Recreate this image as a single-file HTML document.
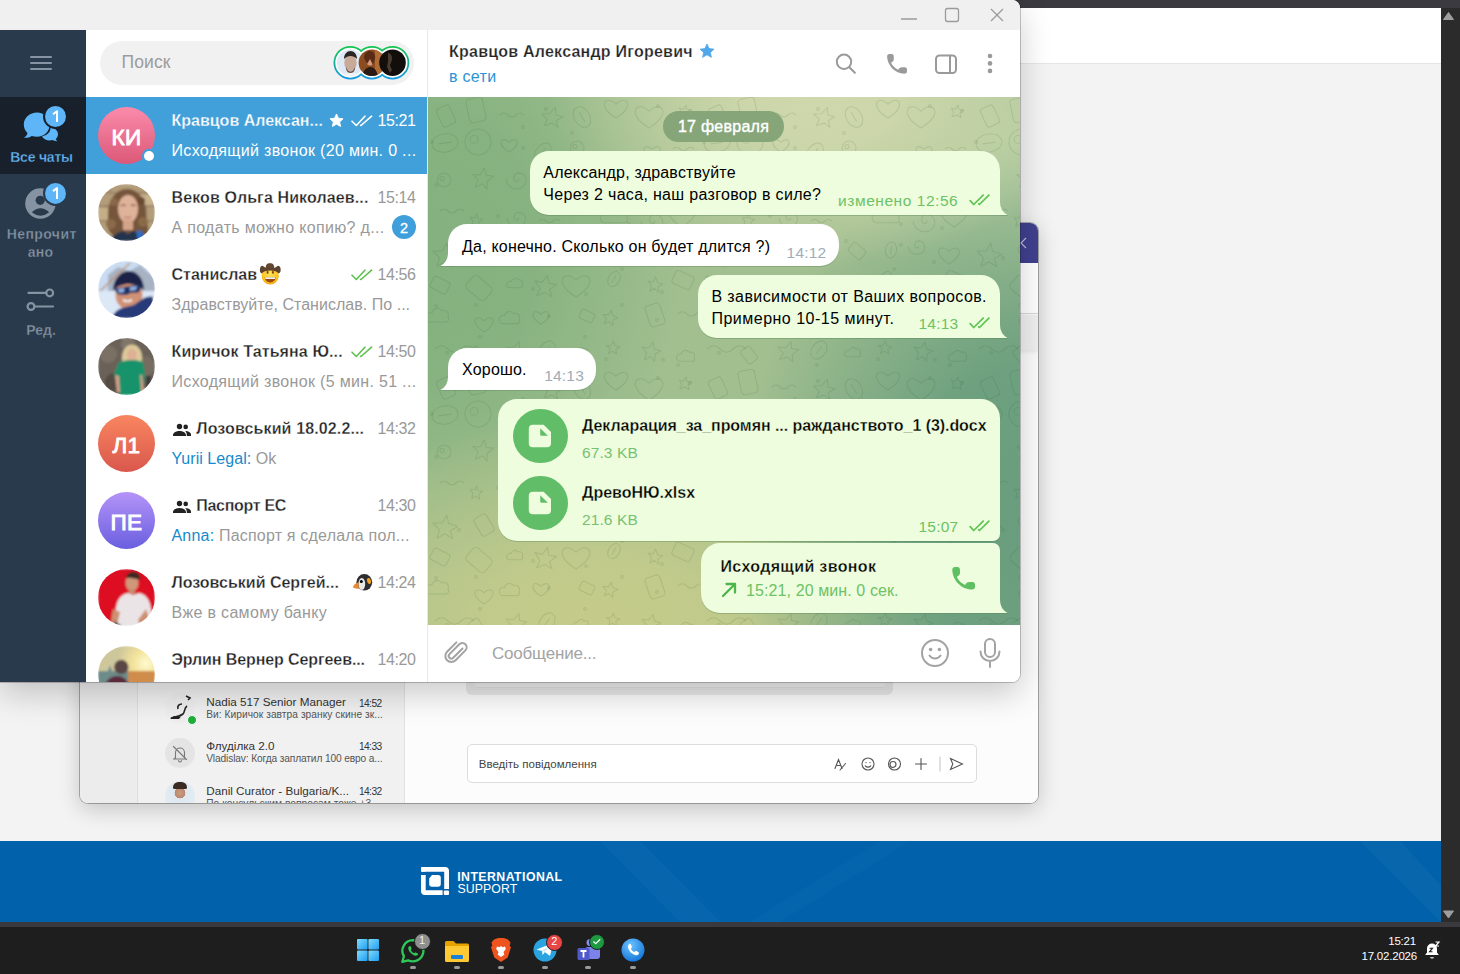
<!DOCTYPE html>
<html><head><meta charset="utf-8">
<style>
*{box-sizing:border-box;margin:0;padding:0}
html,body{width:1460px;height:974px;overflow:hidden}
body{position:relative;background:#f3f3f3;font-family:"Liberation Sans",sans-serif;color:#000}
.a{position:absolute}
.t{position:absolute;white-space:nowrap;line-height:1}
.sb{-webkit-text-stroke:0.25px currentColor}
</style></head>
<body>

<div class="a" style="left:0;top:0;width:1460px;height:8px;background:#3b3a40"></div>
<div class="a" style="left:0;top:8px;width:1441px;height:56px;background:#fff;border-bottom:1px solid #e6e6e6"></div>
<div class="a" style="left:0;top:64px;width:1441px;height:777px;background:#f3f3f3"></div>
<div class="a" style="left:0;top:841px;width:1441px;height:81px;background:#0162ab"></div>
<div class="a" style="left:1441px;top:8px;width:19px;height:914px;background:#2b2b2b"></div>
<div class="a" style="left:0;top:922px;width:1460px;height:5px;background:#3a393d"></div>
<div class="a" style="left:0;top:927px;width:1460px;height:47px;background:#1e1e1e"></div>

<svg class="a" style="left:0;top:841px" width="1441" height="81" viewBox="0 0 1441 81"><g fill="#ffffff"><path d="M600 0h40L720 81h-40z" opacity=".025"/><path d="M880 0h30L780 81h-30z" opacity=".02"/><path d="M1360 0h40L1441 45v36z" opacity=".03"/></g></svg>
<svg class="a" style="left:418px;top:864px" width="34" height="34" viewBox="418 864 34 34"><g fill="#fff"><path d="M421.5 867H445a4 4 0 0 1 4 4V889.1H444.2V871.7H421.5z"/><path d="M421 875.1H425.7V890.3H442.6V895H425a4 4 0 0 1-4-4z"/><rect x="421" y="867" width="4.7" height="4.7" rx="1"/><rect x="443.8" y="890.6" width="5.2" height="4.4" rx="1"/><path d="M432 875H438a2.8 2.8 0 0 1 2.8 2.8V884a2.8 2.8 0 0 1-2.8 2.8H432a2.8 2.8 0 0 1-2.8-2.8V878.5L432 875z"/></g></svg>
<div class="t" style="left:457.2px;top:871px;font-size:12.3px;font-weight:bold;color:#fff;letter-spacing:.45px">INTERNATIONAL</div>
<div class="t" style="left:457.4px;top:882.5px;font-size:12.3px;color:#fff;letter-spacing:.1px">SUPPORT</div>
<svg class="a" style="left:1441px;top:8px" width="19" height="914" viewBox="0 0 19 914"><path d="M2.5 11.5L7.5 4.5 12.5 11.5z" fill="#9e9e9e" stroke="#9e9e9e" stroke-width="1" stroke-linejoin="round"/><path d="M2.5 903L7.5 910 12.5 903z" fill="#9e9e9e" stroke="#9e9e9e" stroke-width="1" stroke-linejoin="round"/></svg>
<svg class="a" style="left:356px;top:938px" width="24" height="24" viewBox="0 0 24 24"><defs><linearGradient id="wg" x1="0" y1="0" x2="1" y2="1"><stop offset="0" stop-color="#7fdcff"/><stop offset="1" stop-color="#1f9df0"/></linearGradient></defs><g fill="url(#wg)"><rect x="1" y="1" width="10.6" height="10.6" rx="1"/><rect x="12.4" y="1" width="10.6" height="10.6" rx="1"/><rect x="1" y="12.4" width="10.6" height="10.6" rx="1"/><rect x="12.4" y="12.4" width="10.6" height="10.6" rx="1"/></g></svg>
<svg class="a" style="left:400px;top:938px" width="26" height="26" viewBox="0 0 26 26"><path d="M13 2.2a10.6 10.6 0 0 0-9.1 16l-1.6 5.6 5.8-1.5A10.6 10.6 0 1 0 13 2.2z" fill="none" stroke="#2fc95a" stroke-width="2.3" stroke-linejoin="round"/><path d="M9.4 8.2c.4-.4 1.1-.3 1.3.2l.9 2c.2.4 0 .8-.3 1.1l-.5.5c.7 1.5 1.8 2.6 3.3 3.3l.5-.5c.3-.3.7-.4 1.1-.3l2 .9c.5.2.6.9.2 1.3-.8.9-1.9 1.3-3 1-3.2-1-5.7-3.5-6.6-6.6-.3-1.1.1-2.2 1.1-2.9z" fill="#2fc95a"/></svg>
<div class="a" style="left:413.5px;top:932.5px;width:17px;height:17px;border-radius:50%;background:#8f8f8f;border:1.5px solid #1f1f1f"></div><div class="t" style="left:413.5px;width:17px;text-align:center;top:935px;font-size:11px;color:#eee">1</div>
<svg class="a" style="left:444px;top:939px" width="26" height="24" viewBox="0 0 26 24"><path d="M1 3.5A1.5 1.5 0 0 1 2.5 2h7l2.5 2.5h11.5A1.5 1.5 0 0 1 25 6v2H1z" fill="#e8a200"/><path d="M1 7h24v14.5a1.5 1.5 0 0 1-1.5 1.5h-21A1.5 1.5 0 0 1 1 21.5z" fill="#ffc933"/><rect x="7" y="16" width="12" height="4" rx="1" fill="#1b7fd8"/></svg>
<svg class="a" style="left:489px;top:937px" width="24" height="26" viewBox="0 0 24 26"><path d="M5 2.5l4-1.5h6l4 1.5 2.5 3-.8 3.2 1.3 1.6-3.3 10.2L12 25l-6.7-4.5L2 10.3l1.3-1.6-.8-3.2z" fill="#f0541e"/><path d="M8 9.5l2.5.7L12 9l1.5 1.2L16 9.5l.8 2.5-2.3 3 .8 2.7L12 20l-3.3-2.3.8-2.7-2.3-3z" fill="#fff"/></svg>
<svg class="a" style="left:533px;top:938px" width="24" height="24" viewBox="0 0 24 24"><circle cx="12" cy="12" r="11.5" fill="#2aa3e0"/><path d="M4.2 11.6L19.6 5.6 16.8 17.4 11.8 13.8 9.8 16.4 9.2 12.6z" fill="#fff" stroke="#fff" stroke-width=".6" stroke-linejoin="round"/><path d="M9.2 12.6L16.5 7.8 11.8 13.8z" fill="#cfe8f6"/></svg>
<div class="a" style="left:545.8px;top:933.5px;width:17px;height:17px;border-radius:50%;background:#e84646;border:1.5px solid #1f1f1f"></div><div class="t" style="left:545.8px;width:17px;text-align:center;top:936px;font-size:11px;color:#fff">2</div>
<svg class="a" style="left:576px;top:937px" width="26" height="26" viewBox="0 0 26 26"><circle cx="14" cy="5.5" r="3.5" fill="#8b8cf0"/><rect x="9" y="10" width="15" height="12" rx="3" fill="#7b83eb"/><rect x="1.5" y="11" width="12" height="12" rx="1.5" fill="#5059c9"/><path d="M4.5 14h6M7.5 14v6.5" stroke="#fff" stroke-width="1.8"/></svg>
<div class="a" style="left:589px;top:933.5px;width:16px;height:16px;border-radius:50%;background:#1d9a3f;border:1.5px solid #1f1f1f"></div><svg class="a" style="left:592px;top:937px" width="10" height="9" viewBox="0 0 10 9"><path d="M1.5 4.5l2.2 2.2 4.5-4.5" fill="none" stroke="#fff" stroke-width="1.3"/></svg>
<svg class="a" style="left:621px;top:938px" width="24" height="24" viewBox="0 0 24 24"><defs><radialGradient id="pg" cx=".4" cy=".3" r=".8"><stop offset="0" stop-color="#6fc3ff"/><stop offset="1" stop-color="#0a6fd6"/></radialGradient></defs><circle cx="12" cy="12" r="11.5" fill="url(#pg)"/><path d="M8.2 6c.6-.3 1.3-.1 1.6.5l1 2c.2.5.1 1-.3 1.4l-.7.6c.7 1.6 1.9 2.9 3.5 3.6l.6-.7c.4-.4.9-.5 1.4-.3l2 1c.6.3.8 1 .5 1.6-.7 1.2-2 1.8-3.3 1.5-3.7-.9-6.5-3.8-7.4-7.4-.3-1.3.2-2.7 1.1-3.8z" fill="#fff"/></svg>
<div class="a" style="left:409.7px;top:966px;width:6px;height:3px;border-radius:1.5px;background:#9a9a9a"></div>
<div class="a" style="left:454px;top:966px;width:6px;height:3px;border-radius:1.5px;background:#9a9a9a"></div>
<div class="a" style="left:497.7px;top:966px;width:6px;height:3px;border-radius:1.5px;background:#9a9a9a"></div>
<div class="a" style="left:542px;top:966px;width:6px;height:3px;border-radius:1.5px;background:#9a9a9a"></div>
<div class="a" style="left:585px;top:966px;width:6px;height:3px;border-radius:1.5px;background:#9a9a9a"></div>
<div class="a" style="left:629.7px;top:966px;width:6px;height:3px;border-radius:1.5px;background:#9a9a9a"></div>
<div class="t" style="left:1340px;width:76px;text-align:right;top:935.5px;font-size:11.5px;color:#fff;letter-spacing:-.2px">15:21</div>
<div class="t" style="left:1340px;width:77px;text-align:right;top:951.2px;font-size:11.5px;color:#fff;letter-spacing:-.2px">17.02.2026</div>
<svg class="a" style="left:1423px;top:941px" width="18" height="19" viewBox="0 0 18 19"><path d="M9 2.5a5 5 0 0 0-5 5v4l-1.8 2.5h13.6L14 11.5v-4a5 5 0 0 0-5-5z" fill="#fff"/><path d="M7 16.3h4a2 1.2 0 0 1-4 0z" fill="#fff"/><path d="M6.5 7.2h3l-3 3.6h3" fill="none" stroke="#1f1f1f" stroke-width="1.1"/><path d="M12.5 1h3.5l-3.5 4h3.5" fill="none" stroke="#fff" stroke-width="1.2"/></svg>
<div id="back" class="a" style="left:80px;top:223px;width:958px;height:580px;background:#fff;border-radius:8px;overflow:hidden;box-shadow:0 0 0 1px rgba(0,0,0,.28),0 6px 22px rgba(0,0,0,.2)">
<div class="a" style="left:0;top:0;width:58px;height:580px;background:#ececec;border-right:1px solid #dedede"></div>
<div class="a" style="left:58px;top:0;width:267px;height:580px;background:#f1f1f1;border-right:1px solid #e2e2e2"></div>
<div class="a" style="left:325px;top:0;width:633px;height:580px;background:#fcfcfc"></div>
<div class="a" style="left:900px;top:0;width:58px;height:40px;background:#40408f"></div>
<div class="a" style="left:900px;top:40px;width:58px;height:51px;background:#fff;border-bottom:1px solid #d8d8d8"></div>
<div class="a" style="left:900px;top:92px;width:58px;height:35px;background:#f0f0f0;box-shadow:0 2px 4px rgba(0,0,0,.08)"></div>
<svg class="a" style="left:936px;top:14px" width="12" height="12" viewBox="0 0 12 12"><path d="M10 1L5 6l5 5" fill="none" stroke="#b8b8e0" stroke-width="1.2"/></svg>
<div class="a" style="left:386px;top:440px;width:427px;height:32px;border-radius:0 0 6px 6px;background:#e9e9e9"></div>
<div class="a" style="left:395px;top:440px;width:410px;height:25px;background:#efefef;border-bottom:1px solid #e0e0e0;border-radius:0 0 3px 3px"></div>
<div class="a" style="left:386.8px;top:521.4px;width:510px;height:39px;border-radius:5px;background:#fff;border:1px solid #dcdcdc"></div>
<div class="t" style="left:398.8px;top:535.5px;font-size:11.5px;color:#444">Введіть повідомлення</div>
<svg class="a" style="left:750px;top:530px" width="140" height="22" viewBox="750 530 140 22"><g fill="none" stroke="#555" stroke-width="1.1" stroke-linecap="round"><circle cx="788" cy="541" r="6"/><path d="M785.3 542.8c.7.9 1.6 1.3 2.7 1.3s2-.4 2.7-1.3"/><circle cx="814.5" cy="541" r="6"/><path d="M813 544.5a3 3 0 1 1 3 -3c0 1.5-1 2.5-3 3z"/><path d="M841 535.5v11M835.5 541h11"/><path d="M860 534v14" stroke="#c8c8c8"/><path d="M870.5 535.5l12 5.5-12 5.5 2.3-5.5z"/><path d="M755 545.5l3.5-9 3.5 9M756.3 542.5h4.4M760 547l5.5-6.5"/></g><circle cx="786" cy="539.6" r=".7" fill="#555"/><circle cx="790" cy="539.6" r=".7" fill="#555"/></svg>
<div class="a" style="left:85.4px;top:470.4px;width:30px;height:30px;border-radius:50%;background:#eeeeee"></div><svg class="a" style="left:85.4px;top:470.4px" width="30" height="30" viewBox="0 0 30 30"><g fill="none" stroke="#222" stroke-width="1.6"><path d="M6 25c3-1 8-1 12-4 2-2 1-6 4-8M17 11c-3 0-5 2-4 5"/><path d="M21 3l4 2-2 2"/></g><path d="M5 26l4-3 6 1 3-3-4 5z" fill="#222"/></svg><div class="a" style="left:107px;top:492px;width:10px;height:10px;border-radius:50%;background:#1fae3b;border:1px solid #fff"></div><div class="t" style="left:126.2px;top:473.4px;font-size:11.7px;color:#333">Nadia 517 Senior Manager</div><div class="t" style="left:278.9px;top:475.5px;font-size:10.2px;color:#333;letter-spacing:-.55px">14:52</div><div class="t" style="left:126.2px;top:487.4px;font-size:10.2px;color:#555;letter-spacing:0.05px">Ви: Киричок завтра зранку скине зк...</div>
<div class="a" style="left:85.4px;top:515.2px;width:30px;height:30px;border-radius:50%;background:#e4e4e4"></div><svg class="a" style="left:85.4px;top:515.2px" width="30" height="30" viewBox="0 0 30 30"><g fill="none" stroke="#777" stroke-width="1.1" stroke-linecap="round"><path d="M10.5 19.5v-5a4.5 4.5 0 0 1 9 0v5l1.5 1.5H9z M13.5 22.5a1.5 1.5 0 0 0 3 0M8.5 8.5l13 13"/></g></svg><div class="t" style="left:126.2px;top:517.0px;font-size:11.7px;color:#333">Флудiлка 2.0</div><div class="t" style="left:278.9px;top:519.1px;font-size:10.2px;color:#333;letter-spacing:-.55px">14:33</div><div class="t" style="left:126.2px;top:531.0px;font-size:10.2px;color:#555;letter-spacing:-0.13px">Vladislav: Когда заплатил 100 евро а...</div>
<div class="a" style="left:85.4px;top:558px;width:30px;height:30px;border-radius:50%;background:radial-gradient(circle at 50% 40%,#c99a80 0,#b98a70 22%,#dfe8f0 24%,#e6eef5 100%)"></div><div class="a" style="left:93px;top:559px;width:14px;height:7px;border-radius:7px 7px 2px 2px;background:#3a2a22"></div><div class="t" style="left:126.2px;top:562.1px;font-size:11.7px;color:#333">Danil Curator - Bulgaria/K...</div><div class="t" style="left:278.9px;top:564.2px;font-size:10.2px;color:#333;letter-spacing:-.55px">14:32</div><div class="t" style="left:126.2px;top:576.1px;font-size:10.2px;color:#555;letter-spacing:0.05px">По консульским вопросам тоже +3...</div>
</div>
<div id="tg" class="a" style="left:0;top:0;width:1020px;height:682px;background:#fff;border-radius:0 8px 8px 0;overflow:hidden;box-shadow:0 0 0 1px rgba(0,0,0,.22),0 12px 32px rgba(0,0,0,.2)">
  <div class="a" style="left:0;top:0;width:1020px;height:30px;background:#f0f0f0"></div>
  <div class="a" style="left:0;top:30px;width:86px;height:652px;background:#293a4c"></div>
  <div class="a" style="left:0;top:97px;width:86px;height:77px;background:#17202b"></div>

  <svg class="a" style="left:0;top:0" width="86" height="682" viewBox="0 0 86 682">
    <g fill="#8593a3">
      <rect x="30" y="56" width="22" height="2" rx="1"/>
      <rect x="30" y="62" width="22" height="2" rx="1"/>
      <rect x="30" y="68" width="22" height="2" rx="1"/>
    </g>
    <g fill="#5eb5f7">
      <path d="M37 112.6c-7.2 0-13.2 5.2-13.2 12 0 3.3 1.4 6.3 3.7 8.4-.4 2-1.7 3.6-3.5 4.8 2.9.3 5.7-.4 7.8-1.8 1.6.5 3.3.8 5.2.8 7.2 0 12.6-5.2 12.6-12s-5.4-12.2-12.6-12.2z"/>
      <path d="M50.5 127.5c4.5.3 7.5 3.3 7.5 6.8 0 1.8-.8 3.5-2.2 4.7.2 1 .9 1.6 1.6 2.2-2 .1-3.6-.4-4.8-1.2-1 .3-2 .4-3 .4-3.5 0-6.5-1.6-7.6-4.2 5.3-.6 8.8-4.6 8.5-8.7z"/>
      <circle cx="55.5" cy="116.5" r="12.5" fill="#17202b"/>
      <circle cx="55.5" cy="116.5" r="10.5"/>
    </g>
    <g>
      <circle cx="40.4" cy="203.5" r="15.2" fill="#8593a3"/>
      <circle cx="40.2" cy="200.3" r="4.6" fill="#293a4c"/>
      <path d="M31.8 212.3Q40.5 204.2 49.2 212.3Q40.5 219.4 31.8 212.3Z" fill="#293a4c"/>
      <circle cx="55.5" cy="193.4" r="12.5" fill="#293a4c"/>
      <circle cx="55.5" cy="193.4" r="10.5" fill="#5eb5f7"/>
    </g>
    <g stroke="#8593a3" stroke-width="2.2" fill="none" stroke-linecap="round">
      <line x1="28.5" y1="292.9" x2="46" y2="292.9"/>
      <circle cx="49.7" cy="292.9" r="3.4"/>
      <line x1="34.5" y1="306.5" x2="53" y2="306.5"/>
      <circle cx="31" cy="306.5" r="3.4"/>
    </g>
  </svg>

<svg class="a" style="left:0;top:0" width="86" height="220" viewBox="0 0 86 220"><g stroke="#fff" stroke-width="2" fill="none" stroke-linejoin="round"><path d="M53 114.2L57 111.2V122.1"/><path d="M53 191.1L57 188.1V199"/></g></svg>
<div class="t" style="top:150.05px;font-size:14px;color:#64b5f6;font-weight:bold;-webkit-text-stroke:0.3px #17202b;letter-spacing:-0.2px;left:-158.50px;width:400px;text-align:center;">Все чаты</div>
<div class="t" style="top:226.95px;font-size:14px;color:#8593a3;font-weight:bold;-webkit-text-stroke:0.3px #293a4c;letter-spacing:0.4px;left:-158.30px;width:400px;text-align:center;">Непрочит</div>
<div class="t" style="top:245.45px;font-size:14px;color:#8593a3;font-weight:bold;-webkit-text-stroke:0.3px #293a4c;letter-spacing:0.2px;left:-159.50px;width:400px;text-align:center;">ано</div>
<div class="t" style="top:322.95px;font-size:14px;color:#8593a3;font-weight:bold;-webkit-text-stroke:0.3px #293a4c;left:-159.00px;width:400px;text-align:center;">Ред.</div>
  <div class="a" style="left:86px;top:30px;width:342px;height:652px;background:#fff"></div>
  <div class="a" style="left:86px;top:97px;width:342px;height:77px;background:#419fd9"></div>
  <div class="a" style="left:427px;top:30px;width:1px;height:652px;background:#e8e8e8"></div>

<div class="a" style="left:86px;top:30px;width:342px;height:652px;overflow:hidden">
</div>
<div class="a" style="left:98px;top:107px;width:57px;height:57px;border-radius:50%;background:linear-gradient(#fb8bab,#dc5878)"></div><div class="t" style="left:98px;width:57px;text-align:center;top:126.88px;font-size:22.5px;color:#fff;-webkit-text-stroke:0.9px #fff;letter-spacing:0.3px">КИ</div>
<div class="a" style="left:143.6px;top:150.6px;width:10.8px;height:10.8px;border-radius:50%;background:#fff;box-shadow:0 0 0 2.2px #419fd9"></div>
<div class="a" style="left:98px;top:415px;width:57px;height:57px;border-radius:50%;background:linear-gradient(#f98660,#d9574c)"></div><div class="t" style="left:98px;width:57px;text-align:center;top:434.88px;font-size:22.5px;color:#fff;-webkit-text-stroke:0.9px #fff;letter-spacing:0.3px">Л1</div>
<div class="a" style="left:98px;top:492px;width:57px;height:57px;border-radius:50%;background:linear-gradient(#b493f8,#6a5fdf)"></div><div class="t" style="left:98px;width:57px;text-align:center;top:511.88px;font-size:22.5px;color:#fff;-webkit-text-stroke:0.9px #fff;letter-spacing:0.3px">ПЕ</div>
<svg class="a" style="left:98px;top:184px" width="57" height="57" viewBox="0 0 57 57"><defs><clipPath id="c98_184"><circle cx="28.5" cy="28.5" r="28.5"/></clipPath><filter id="bc98_184" x="-10%" y="-10%" width="120%" height="120%"><feGaussianBlur stdDeviation="0.9"/></filter></defs><g clip-path="url(#c98_184)"><g filter="url(#bc98_184)"><rect width="57" height="57" fill="#b39c7a"/><path d="M0 9h57M0 22h57M0 37h57M12 0v9M40 9v13M8 22v15M48 22v15" stroke="#8c7658" stroke-width="1.4" opacity=".7"/><rect x="42" y="11" width="15" height="10" fill="#c9b48e"/><rect x="0" y="24" width="12" height="12" fill="#c4ae88"/><path d="M10 30c0-14 8-25 19-25s19 10 19 24c0 8 3 13 2 20l-6 4H16l-5-6c-2-5-1-10-1-17z" fill="#75553a"/><circle cx="13" cy="40" r="5" fill="#8a6a48"/><circle cx="45" cy="38" r="5" fill="#8a6a48"/><circle cx="16" cy="18" r="4" fill="#8a6848"/><circle cx="43" cy="17" r="4" fill="#6a4c32"/><ellipse cx="30" cy="25" rx="10" ry="14" fill="#dfb29a"/><rect x="25" y="36" width="10" height="10" fill="#d4a48a"/><path d="M22.5 21.5c2-.8 4-.8 5.5 0M32.5 21.5c2-.8 4-.8 5.5 0" stroke="#8a5a48" stroke-width="1"/><path d="M26.5 33c2 .8 4.5 .8 6.5 0" stroke="#b06a60" stroke-width="1.2"/><path d="M12 57c3-6 8-9 13-10l5 3 5-3c5 1 10 4 12 10z" fill="#22344e"/><path d="M38 48l5-2 6 11h-9z" fill="#2f6cc0"/></g></g></svg>
<svg class="a" style="left:98px;top:261px" width="57" height="57" viewBox="0 0 57 57"><defs><clipPath id="c98_261"><circle cx="28.5" cy="28.5" r="28.5"/></clipPath><filter id="bc98_261" x="-10%" y="-10%" width="120%" height="120%"><feGaussianBlur stdDeviation="0.9"/></filter></defs><g clip-path="url(#c98_261)"><g filter="url(#bc98_261)"><rect width="57" height="57" fill="#c9dcf2"/><path d="M10 14l10-8 12 4 10-6 15 14v20H10z" fill="#9fa8b6" opacity=".8"/><rect x="0" y="30" width="57" height="27" fill="#dce8f6"/><path d="M2 30L32 2" stroke="#c08a60" stroke-width="1.2"/><ellipse cx="31" cy="34" rx="13.5" ry="15" fill="#d09276"/><path d="M15 30c0-11 7-20 16-20s15 9 15 19c-4-4-9-6-15-6s-12 2-16 7z" fill="#1b2246"/><path d="M17 27.5l25-4 1.5 3-3 5-8 .5-4 2-8-.5-3-3z" fill="#223066"/><path d="M20 28l6-1 0 4-5 1zM32 26l7-1-1 4-6 1z" fill="#8fb0e0"/><path d="M25 39c3 1.5 6 1.5 9 0" stroke="#fff" stroke-width="1.5"/><path d="M14 57c2-7 8-10 14-11l8-2c6-4 12-10 19-8l2 21z" fill="#283a78"/></g></g></svg>
<svg class="a" style="left:98px;top:338px" width="57" height="57" viewBox="0 0 57 57"><defs><clipPath id="c98_338"><circle cx="28.5" cy="28.5" r="28.5"/></clipPath><filter id="bc98_338" x="-10%" y="-10%" width="120%" height="120%"><feGaussianBlur stdDeviation="0.9"/></filter></defs><g clip-path="url(#c98_338)"><g filter="url(#bc98_338)"><rect width="57" height="57" fill="#6a6258"/><circle cx="10" cy="16" r="9" fill="#7a7064"/><circle cx="47" cy="28" r="10" fill="#766c60"/><circle cx="16" cy="44" r="9" fill="#544c44"/><circle cx="30" cy="6" r="7" fill="#80766a"/><path d="M25 26c-2-6-1-13 3-17 3-3 9-3 12 0 4 4 5 11 3 17l-3 2h-12z" fill="#dcc99a"/><ellipse cx="34" cy="17" rx="4.8" ry="6.5" fill="#deb094"/><path d="M16 36l5-12 9-2h8l7 2 2 12-3 21H22z" fill="#15936a"/><path d="M17 37l2 17h3l-1-16zM44 37l2 16h-3l-1-16z" fill="#d4a088"/><rect x="48" y="38" width="5" height="13" fill="#3a3a3c"/></g></g></svg>
<svg class="a" style="left:98px;top:569px" width="57" height="57" viewBox="0 0 57 57"><defs><clipPath id="c98_569"><circle cx="28.5" cy="28.5" r="28.5"/></clipPath><filter id="bc98_569" x="-10%" y="-10%" width="120%" height="120%"><feGaussianBlur stdDeviation="0.9"/></filter></defs><g clip-path="url(#c98_569)"><g filter="url(#bc98_569)"><rect width="57" height="57" fill="#dd0a20"/><path d="M0 0h57v57H0z" fill="url(#rg6)" opacity=".0"/><ellipse cx="34" cy="14" rx="6.5" ry="8.5" fill="#d0977a"/><path d="M28 9c1-5 5-7 9-6s6 4 5 8l-3-1-6-1z" fill="#3b2a22"/><rect x="31" y="20" width="6" height="5" fill="#c88a6c"/><path d="M14 57l4-18c1-9 6-14 12-15l5 2 6-2c6 1 11 6 12 16l1 17z" fill="#ebe4e6"/><path d="M15 40l-2 12 6 4 3-13zM48 40l4 12-10 5-2-6z" fill="#cc9072"/><path d="M16 52l8 5h18l6-4v4H16z" fill="#2a2a2e"/></g></g></svg>
<svg class="a" style="left:98px;top:646px" width="57" height="36" viewBox="0 0 57 36"><defs><clipPath id="c98_646"><circle cx="28.5" cy="28.5" r="28.5"/></clipPath><filter id="bc98_646" x="-10%" y="-10%" width="120%" height="120%"><feGaussianBlur stdDeviation="0.9"/></filter></defs><g clip-path="url(#c98_646)"><g filter="url(#bc98_646)"><defs><radialGradient id="sun7" cx=".84" cy=".3" r=".5"><stop offset="0" stop-color="#fffbd2"/><stop offset=".45" stop-color="#f3e39a"/><stop offset="1" stop-color="#cfc79c"/></radialGradient></defs><rect width="57" height="57" fill="url(#sun7)"/><path d="M0 25h10l2-6 2 6h4l3-4 3 4h33v32H0z" fill="#6d8b88"/><path d="M30 25h27v32H30z" fill="#cf8c4c"/><circle cx="23.3" cy="21" r="7.2" fill="#5a4644"/><path d="M7 40c1-6 6-10 12-10s10 3 12 10z" fill="#5c2a3e"/></g></g></svg>
<svg class="a" style="left:173px;top:421.5px" width="18" height="14" viewBox="0 0 18 14"><path d="M6.5 7.2a2.7 2.7 0 1 0 0-5.4 2.7 2.7 0 0 0 0 5.4zm6.2 0a2.3 2.3 0 1 0 0-4.6 2.3 2.3 0 0 0 0 4.6zM0 13.2c0-2.6 3.2-4.2 6.5-4.2s6.5 1.6 6.5 4.2V14H0zm12.2-4.1c2.7.1 5.8 1.3 5.8 3.6V14h-4.2v-.9c0-1.6-.6-3-1.6-4z" fill="#222"/></svg>
<svg class="a" style="left:173px;top:498.5px" width="18" height="14" viewBox="0 0 18 14"><path d="M6.5 7.2a2.7 2.7 0 1 0 0-5.4 2.7 2.7 0 0 0 0 5.4zm6.2 0a2.3 2.3 0 1 0 0-4.6 2.3 2.3 0 0 0 0 4.6zM0 13.2c0-2.6 3.2-4.2 6.5-4.2s6.5 1.6 6.5 4.2V14H0zm12.2-4.1c2.7.1 5.8 1.3 5.8 3.6V14h-4.2v-.9c0-1.6-.6-3-1.6-4z" fill="#222"/></svg>
<svg class="a" style="left:250px;top:258px" width="40" height="30" viewBox="250 258 40 30"><defs><radialGradient id="cbf" cx=".5" cy=".35" r=".7"><stop offset="0" stop-color="#ffe45a"/><stop offset=".7" stop-color="#fbc21f"/><stop offset="1" stop-color="#f29a12"/></radialGradient></defs><circle cx="270.2" cy="276" r="8.6" fill="url(#cbf)"/><ellipse cx="267.6" cy="272.3" rx="0.95" ry="1.7" fill="#8a4a0c"/><ellipse cx="272.9" cy="272.3" rx="0.95" ry="1.7" fill="#8a4a0c"/><path d="M264.6 277.2H275.8C275.5 280.6 273.2 282.4 270.2 282.4S264.9 280.6 264.6 277.2Z" fill="#9a4a0a"/><path d="M264.9 277.3H275.5C275.4 278.2 275.2 278.7 275 279H265.4C265.2 278.7 265 278.2 264.9 277.3Z" fill="#eef2f6"/><path d="M265.6 269.2C265.4 264.4 267.6 263 270 263.3C272.4 263 274.6 264.4 274.4 269.2Z" fill="#654630"/><path d="M260.2 267.8C260.8 265.6 262.6 265.2 263.6 266.6C265.6 268.3 267.6 268.8 270.2 268.8C272.8 268.8 274.8 268.3 276.8 266.6C277.8 265.2 279.6 265.6 280.4 267.8C281.2 270.4 280.4 273 278.6 273.4C277.2 271.6 274.4 270.4 270.2 270.4C266 270.4 263.2 271.6 261.8 273.4C260 273 259.4 270.4 260.2 267.8Z" fill="#5e4230"/></svg>
<svg class="a" style="left:345px;top:568px" width="35" height="30" viewBox="345 568 35 30"><ellipse cx="364.3" cy="582.3" rx="7.9" ry="8.3" fill="#2e2e30"/><ellipse cx="361.8" cy="584" rx="3.4" ry="6" fill="#e8e8e8"/><circle cx="361.3" cy="581.6" r="1.5" fill="#000"/><ellipse cx="369" cy="581" rx="1.9" ry="3" fill="#f5a21c" transform="rotate(-15 369 581)"/><path d="M352.9 587.5C353.6 584.8 356 582.8 358.4 582.6L358.9 588.4C357 588.9 354.6 588.6 352.9 587.5Z" fill="#e58a2e"/></svg>
<div class="t" style="top:113.16px;font-size:16px;color:#fff;font-weight:bold;-webkit-text-stroke:0.3px #419fd9;left:171.50px;">Кравцов Алексан...</div><div class="t" style="top:113.16px;font-size:16px;color:#fff;letter-spacing:-0.4px;left:15.50px;width:400px;text-align:right;">15:21</div><div class="t" style="top:142.96px;font-size:16px;color:#fff;letter-spacing:0.32px;left:171.50px;">Исходящий звонок (20 мин. 0 ...</div>
<svg class="a" style="left:329px;top:112.5px" width="15" height="15" viewBox="0 0 24 24"><path d="M12 1.5l3.1 6.9 7.4.8-5.5 5 1.6 7.3L12 17.8l-6.6 3.7L7 14.2l-5.5-5 7.4-.8z" fill="#fff" stroke="#fff" stroke-width="1.5" stroke-linejoin="round"/></svg>
<svg class="a" style="left:350.5px;top:114.5px" width="22" height="12" viewBox="0 0 22 12"><path d="M1 6.2l4.3 4.3 8.6-9.3M9.6 10.3l.4.2 10.6-9.3" fill="none" stroke="#fff" stroke-width="1.6" stroke-linecap="round" stroke-linejoin="round"/></svg>
<div class="t" style="top:190.16px;font-size:16px;color:#222;font-weight:bold;-webkit-text-stroke:0.3px #fff;letter-spacing:0.12px;left:171.50px;">Веков Ольга Николаев...</div><div class="t" style="top:190.16px;font-size:16px;color:#999;letter-spacing:-0.4px;left:15.50px;width:400px;text-align:right;">15:14</div><div class="t" style="top:219.96px;font-size:16px;color:#999;letter-spacing:0.32px;left:171.50px;">А подать можно копию? д...</div>
<div class="a" style="left:392px;top:215px;width:24px;height:24px;border-radius:12px;background:#3f9fdb"></div>
<div class="t" style="top:221.03px;font-size:14.5px;color:#fff;left:204.00px;width:400px;text-align:center;-webkit-text-stroke:0.3px #fff;">2</div>
<div class="t" style="top:267.16px;font-size:16px;color:#222;font-weight:bold;-webkit-text-stroke:0.3px #fff;left:171.50px;">Станислав</div><div class="t" style="top:267.16px;font-size:16px;color:#999;letter-spacing:-0.4px;left:15.50px;width:400px;text-align:right;">14:56</div><div class="t" style="top:296.96px;font-size:16px;color:#999;letter-spacing:0.03px;left:171.50px;">Здравствуйте, Станислав. По ...</div>
<svg class="a" style="left:350.5px;top:268.5px" width="22" height="12" viewBox="0 0 22 12"><path d="M1 6.2l4.3 4.3 8.6-9.3M9.6 10.3l.4.2 10.6-9.3" fill="none" stroke="#5fc04f" stroke-width="1.6" stroke-linecap="round" stroke-linejoin="round"/></svg>
<div class="t" style="top:344.16px;font-size:16px;color:#222;font-weight:bold;-webkit-text-stroke:0.3px #fff;letter-spacing:0.12px;left:171.50px;">Киричок Татьяна Ю...</div><div class="t" style="top:344.16px;font-size:16px;color:#999;letter-spacing:-0.4px;left:15.50px;width:400px;text-align:right;">14:50</div><div class="t" style="top:373.96px;font-size:16px;color:#999;letter-spacing:0.32px;left:171.50px;">Исходящий звонок (5 мин. 51 ...</div>
<svg class="a" style="left:350.5px;top:345.5px" width="22" height="12" viewBox="0 0 22 12"><path d="M1 6.2l4.3 4.3 8.6-9.3M9.6 10.3l.4.2 10.6-9.3" fill="none" stroke="#5fc04f" stroke-width="1.6" stroke-linecap="round" stroke-linejoin="round"/></svg>
<div class="t" style="top:421.16px;font-size:16px;color:#222;font-weight:bold;-webkit-text-stroke:0.3px #fff;letter-spacing:0.13px;left:196.30px;">Лозовський 18.02.2...</div><div class="t" style="top:421.16px;font-size:16px;color:#999;letter-spacing:-0.4px;left:15.50px;width:400px;text-align:right;">14:32</div>
<div class="t" style="top:450.96px;font-size:16px;color:#999;letter-spacing:0.05px;left:171.50px;"><span style="color:#168acd">Yurii Legal:</span> Ok</div>
<div class="t" style="top:498.16px;font-size:16px;color:#222;font-weight:bold;-webkit-text-stroke:0.3px #fff;letter-spacing:-0.3px;left:196.30px;">Паспорт ЕС</div><div class="t" style="top:498.16px;font-size:16px;color:#999;letter-spacing:-0.4px;left:15.50px;width:400px;text-align:right;">14:30</div>
<div class="t" style="top:527.96px;font-size:16px;color:#999;letter-spacing:0.2px;left:171.50px;"><span style="color:#168acd">Anna:</span> Паспорт я сделала пол...</div>
<div class="t" style="top:575.16px;font-size:16px;color:#222;font-weight:bold;-webkit-text-stroke:0.3px #fff;left:171.50px;">Лозовський Сергей...</div><div class="t" style="top:575.16px;font-size:16px;color:#999;letter-spacing:-0.4px;left:15.50px;width:400px;text-align:right;">14:24</div><div class="t" style="top:604.96px;font-size:16px;color:#999;letter-spacing:0.32px;left:171.50px;">Вже в самому банку</div>
<div class="t" style="top:652.16px;font-size:16px;color:#222;font-weight:bold;-webkit-text-stroke:0.3px #fff;letter-spacing:-0.1px;left:171.50px;">Эрлин Вернер Сергеев...</div><div class="t" style="top:652.16px;font-size:16px;color:#999;letter-spacing:-0.4px;left:15.50px;width:400px;text-align:right;">14:20</div>
  <div class="a" style="left:428px;top:30px;width:592px;height:67px;background:#fff"></div>
  <div id="wall" class="a" style="left:428px;top:97px;width:592px;height:528px;overflow:hidden;background:#a2bf90">
    <div class="a" style="left:0;top:0;width:592px;height:528px;background:
      radial-gradient(ellipse 270px 170px at 390px 0px, rgba(207,216,172,1) 0%, rgba(207,216,172,.9) 30%, rgba(207,216,172,0) 100%),
      radial-gradient(ellipse 300px 380px at 610px 420px, rgba(104,157,125,1) 0%, rgba(104,157,125,.9) 40%, rgba(104,157,125,0) 100%),
      radial-gradient(ellipse 340px 230px at 170px 545px, rgba(198,204,138,1) 0%, rgba(198,204,138,.85) 35%, rgba(198,204,138,0) 100%),
      radial-gradient(ellipse 260px 330px at 0px 150px, rgba(132,177,127,1) 0%, rgba(132,177,127,.9) 40%, rgba(132,177,127,0) 100%),
      radial-gradient(ellipse 200px 190px at 592px 40px, rgba(180,204,160,1) 0%, rgba(180,204,160,.7) 40%, rgba(180,204,160,0) 100%),
      #a2bf90"></div>
    <svg class="a" style="left:0;top:0" width="592" height="528"><defs><pattern id="doodle" width="272" height="272" patternUnits="userSpaceOnUse"><g fill="none" stroke="rgba(30,70,30,.12)" stroke-width="1.1"><rect x="8" y="12.0" width="20" height="14.0" rx="3.0" transform="rotate(65 18 19)"/><rect x="36" y="4.6" width="24" height="16.8" rx="3.6" transform="rotate(78 48 13)"/><path d="M72 18q4.0 -4.0 8 0t8 0t8 0"/><circle cx="95" cy="30" r="1.4"/><polygon points="127.2,10.5 127.9,18.0 134.9,19.7 128.3,23.4 130.0,30.2 124.0,25.9 116.2,28.8 119.3,22.4 113.7,17.0 121.4,16.8" stroke-linejoin="round"/><circle cx="118" cy="12" r="1.4"/><g transform="rotate(59 154 20)"><ellipse cx="154" cy="20" rx="11" ry="7.7"/><path d="M148.5 20h11.0"/></g><path d="M188 21C168 9.0 178 -3.0 188 7.0C198 -3.0 208 9.0 188 21z"/><path d="M221 31C197 16.6 209 2.200000000000003 221 14.2C233 2.200000000000003 245 16.6 221 31z"/><circle cx="230" cy="9" r="1.4"/><polygon points="258.2,8.1 258.9,12.5 263.7,13.1 259.9,16.2 261.0,20.7 257.0,18.1 251.8,19.7 253.9,15.8 251.2,11.1 255.2,12.4" stroke-linejoin="round"/><circle cx="262" cy="14" r="1.4"/><g transform="rotate(172 17 46)"><ellipse cx="17" cy="46" rx="13" ry="9.1"/><path d="M10.5 46h13.0"/></g><circle cx="4" cy="45" r="1.4"/><circle cx="50" cy="45" r="13"/><circle cx="46.1" cy="42.4" r="3.9"/><path d="M81 55C67 46.6 74 38.2 81 45.2C88 38.2 95 46.6 81 55z"/><circle cx="95" cy="51" r="1.4"/><g transform="rotate(130 115 55)"><ellipse cx="115" cy="55" rx="10" ry="7.0"/><path d="M110.0 55h10.0"/></g><circle cx="127" cy="60" r="1.4"/><circle cx="149" cy="51" r="7"/><circle cx="146.9" cy="49.6" r="2.1"/><circle cx="144" cy="36" r="1.4"/><path d="M178 57q3.5 -3.5 7 0t7 0t7 0"/><circle cx="184" cy="63" r="1.4"/><path d="M224 62C210 53.6 217 45.2 224 52.2C231 45.2 238 53.6 224 62z"/><path d="M245 52q3.5 -3.5 7 0t7 0t7 0"/><circle cx="16" cy="83" r="7"/><circle cx="13.9" cy="81.6" r="2.1"/><circle cx="8" cy="88" r="1.4"/><polygon points="56.2,71.1 58.6,78.6 65.6,79.0 59.4,84.3 59.1,92.2 54.8,86.9 47.5,90.1 50.1,82.6 44.9,77.6 52.4,77.8" stroke-linejoin="round"/><path d="M90.0 82.0 L90.4 82.1 L90.7 82.5 L90.7 83.0 L90.4 83.6 L89.9 84.1 L89.1 84.3 L88.1 84.2 L87.2 83.7 L86.4 82.8 L85.9 81.6 L85.9 80.1 L86.4 78.6 L87.5 77.2 L89.1 76.3 L91.0 75.9 L93.1 76.2 L95.1 77.2 L96.8 78.9 L97.8 81.1 L98.1 83.8 L97.4 86.5 L95.9 88.9 L93.5 90.8 L90.5 91.9 L87.2 92.0 L84.0 90.9 L81.1 88.8 L79.0 85.7 L78.0 82.0"/><circle cx="121" cy="82" r="10"/><circle cx="118.0" cy="80.0" r="3.0"/><path d="M153 86C139 77.6 146 69.2 153 76.2C160 69.2 167 77.6 153 86z"/><circle cx="168" cy="78" r="1.4"/><circle cx="184" cy="90" r="9"/><circle cx="181.3" cy="88.2" r="2.7"/><circle cx="200" cy="89" r="1.4"/><path d="M222.0 83.0 L222.4 83.1 L222.7 83.5 L222.7 84.0 L222.4 84.6 L221.9 85.1 L221.1 85.3 L220.1 85.2 L219.2 84.7 L218.4 83.8 L217.9 82.6 L217.9 81.1 L218.4 79.6 L219.5 78.2 L221.1 77.3 L223.0 76.9 L225.1 77.2 L227.1 78.2 L228.8 79.9 L229.8 82.1 L230.1 84.8 L229.4 87.5 L227.9 89.9 L225.5 91.8 L222.5 92.9 L219.2 93.0 L216.0 91.9 L213.1 89.8 L211.0 86.7 L210.0 83.0"/><rect x="240" y="74.3" width="22" height="15.4" rx="3.3" transform="rotate(83 251 82)"/><path d="M12 114q4.0 -4.0 8 0t8 0t8 0"/><polygon points="48.6,117.0 50.2,121.7 54.7,122.0 50.9,125.1 51.5,130.1 47.5,127.1 43.7,129.5 44.9,124.6 42.2,120.2 47.0,121.0" stroke-linejoin="round"/><path d="M90.0 121.0 L90.4 121.1 L90.6 121.5 L90.6 121.9 L90.4 122.5 L89.9 122.9 L89.2 123.1 L88.3 123.0 L87.4 122.6 L86.7 121.7 L86.2 120.6 L86.2 119.2 L86.7 117.9 L87.7 116.6 L89.1 115.8 L90.9 115.4 L92.8 115.6 L94.7 116.6 L96.2 118.1 L97.2 120.2 L97.4 122.6 L96.8 125.1 L95.4 127.4 L93.2 129.1 L90.5 130.1 L87.5 130.1 L84.5 129.2 L81.8 127.2 L79.9 124.4 L79.0 121.0"/><circle cx="70" cy="119" r="1.4"/><path d="M111 124q3.5 -3.5 7 0t7 0t7 0"/><circle cx="124" cy="106" r="1.4"/><path d="M145 114q4.5 -4.5 9 0t9 0t9 0"/><circle cx="140" cy="106" r="1.4"/><path d="M176 125.8a5.4 5.4 0 0 1 3.5999999999999996 -10.8a6.6000000000000005 6.6000000000000005 0 0 1 12.0 -2.4000000000000004a5.4 5.4 0 0 1 7.199999999999999 7.199999999999999a4.800000000000001 4.800000000000001 0 0 1 -1.2000000000000002 6.0z"/><circle cx="201" cy="127" r="1.4"/><path d="M226.0 124.0 L226.4 124.1 L226.7 124.5 L226.8 125.1 L226.5 125.7 L225.9 126.2 L225.0 126.5 L224.0 126.4 L222.9 125.8 L222.1 124.9 L221.5 123.5 L221.5 121.9 L222.1 120.3 L223.3 118.9 L225.0 117.8 L227.1 117.4 L229.4 117.7 L231.5 118.8 L233.3 120.6 L234.5 123.1 L234.8 125.9 L234.1 128.9 L232.4 131.5 L229.8 133.6 L226.6 134.7 L223.0 134.8 L219.5 133.6 L216.4 131.3 L214.1 128.0 L213.0 124.0"/><path d="M254 130C230 115.6 242 101.2 254 113.2C266 101.2 278 115.6 254 130z"/><circle cx="242" cy="131" r="1.4"/><polygon points="18.9,146.1 20.5,154.3 29.9,157.5 22.3,161.4 24.6,169.5 16.9,164.8 9.1,169.3 11.4,160.6 5.0,154.0 14.2,153.9" stroke-linejoin="round"/><circle cx="31" cy="161" r="1.4"/><rect x="46" y="149.0" width="20" height="14.0" rx="3.0" transform="rotate(59 56 156)"/><polygon points="81.6,146.1 82.8,152.1 88.7,152.8 83.5,157.0 84.1,163.0 79.3,159.0 72.9,160.6 76.1,156.0 71.4,152.2 77.9,151.5" stroke-linejoin="round"/><path d="M116.0 155.0 L116.4 155.1 L116.7 155.5 L116.8 156.1 L116.5 156.7 L115.9 157.2 L115.0 157.5 L114.0 157.4 L112.9 156.8 L112.1 155.9 L111.5 154.5 L111.5 152.9 L112.1 151.3 L113.3 149.9 L115.0 148.8 L117.1 148.4 L119.4 148.7 L121.5 149.8 L123.3 151.6 L124.5 154.1 L124.8 156.9 L124.1 159.9 L122.4 162.5 L119.8 164.6 L116.6 165.7 L113.0 165.8 L109.5 164.6 L106.4 162.3 L104.1 159.0 L103.0 155.0"/><rect x="149" y="148.4" width="16" height="11.2" rx="2.4" transform="rotate(41 157 154)"/><circle cx="146" cy="144" r="1.4"/><g transform="rotate(98 191 153)"><ellipse cx="191" cy="153" rx="8" ry="5.6"/><path d="M187.0 153h8.0"/></g><circle cx="201" cy="148" r="1.4"/><path d="M218.0 149.0 L218.3 149.1 L218.5 149.4 L218.6 149.9 L218.4 150.3 L217.9 150.7 L217.2 150.9 L216.4 150.8 L215.6 150.4 L215.0 149.7 L214.6 148.6 L214.6 147.4 L215.0 146.2 L215.9 145.0 L217.2 144.2 L218.8 143.9 L220.6 144.1 L222.3 145.0 L223.6 146.4 L224.5 148.3 L224.7 150.5 L224.2 152.7 L222.9 154.8 L220.9 156.4 L218.4 157.3 L215.7 157.3 L213.0 156.4 L210.6 154.6 L208.9 152.1 L208.0 149.0"/><circle cx="234" cy="165" r="1.4"/><path d="M249 167C231 156.2 240 145.4 249 154.4C258 145.4 267 156.2 249 167z"/><rect x="3" y="181.7" width="18" height="12.6" rx="2.7" transform="rotate(27 12 188)"/><rect x="39" y="182.6" width="24" height="16.8" rx="3.6" transform="rotate(40 51 191)"/><path d="M81 190.8a3.15 3.15 0 0 1 2.1 -6.3a3.8500000000000005 3.8500000000000005 0 0 1 7.0 -1.4000000000000001a3.15 3.15 0 0 1 4.2 4.2a2.8000000000000003 2.8000000000000003 0 0 1 -0.7000000000000001 3.5z"/><polygon points="119.5,178.3 120.9,186.2 128.7,187.4 121.6,192.8 124.0,199.7 116.8,195.4 108.7,198.7 111.9,191.6 106.9,183.6 114.1,185.4" stroke-linejoin="round"/><circle cx="105" cy="192" r="1.4"/><path d="M148 200C124 185.6 136 171.2 148 183.2C160 171.2 172 185.6 148 200z"/><circle cx="158" cy="197" r="1.4"/><g transform="rotate(121 186 182)"><ellipse cx="186" cy="182" rx="8" ry="5.6"/><path d="M182.0 182h8.0"/></g><circle cx="194" cy="172" r="1.4"/><polygon points="227.5,180.0 229.7,185.7 234.9,186.8 230.0,190.0 230.7,195.1 225.9,191.4 222.0,194.2 223.4,188.2 220.1,184.0 225.1,185.0" stroke-linejoin="round"/><circle cx="234" cy="195" r="1.4"/><rect x="245" y="176.0" width="20" height="14.0" rx="3.0" transform="rotate(25 255 183)"/><path d="M1 225.0a4.5 4.5 0 0 1 3.0 -9.0a5.5 5.5 0 0 1 10.0 -2.0a4.5 4.5 0 0 1 6.0 6.0a4.0 4.0 0 0 1 -1.0 5.0z"/><circle cx="8" cy="209" r="1.4"/><path d="M56 235C40 225.4 48 215.8 56 223.8C64 215.8 72 225.4 56 235z"/><circle cx="48" cy="208" r="1.4"/><path d="M74 226.6a4.05 4.05 0 0 1 2.6999999999999997 -8.1a4.95 4.95 0 0 1 9.0 -1.8a4.05 4.05 0 0 1 5.3999999999999995 5.3999999999999995a3.6 3.6 0 0 1 -0.9 4.5z"/><path d="M113 227C99 218.6 106 210.2 113 217.2C120 210.2 127 218.6 113 227z"/><circle cx="121" cy="219" r="1.4"/><rect x="152" y="214.1" width="14" height="9.8" rx="2.1" transform="rotate(27 159 219)"/><polygon points="183.3,213.1 184.7,218.6 190.0,220.7 185.2,222.6 184.6,228.6 181.0,224.5 176.4,226.7 178.4,221.4 174.8,217.5 180.7,217.6" stroke-linejoin="round"/><circle cx="194" cy="208" r="1.4"/><rect x="216" y="210.3" width="22" height="15.4" rx="3.3" transform="rotate(71 227 218)"/><circle cx="229" cy="223" r="1.4"/><path d="M250 217q4.5 -4.5 9 0t9 0t9 0"/><path d="M7 252q6.5 -6.5 13 0t13 0t13 0"/><circle cx="19" cy="256" r="1.4"/><rect x="41" y="252.4" width="16" height="11.2" rx="2.4" transform="rotate(52 49 258)"/><circle cx="52" cy="240" r="1.4"/><polygon points="91.2,244.5 91.5,251.5 98.8,252.9 92.2,257.6 92.9,264.9 87.3,259.9 79.8,262.4 83.3,256.4 78.2,250.0 85.6,250.7" stroke-linejoin="round"/><g transform="rotate(126 119 253)"><ellipse cx="119" cy="253" rx="10" ry="7.0"/><path d="M114.0 253h10.0"/></g><circle cx="117" cy="268" r="1.4"/><path d="M147 259.8a3.15 3.15 0 0 1 2.1 -6.3a3.8500000000000005 3.8500000000000005 0 0 1 7.0 -1.4000000000000001a3.15 3.15 0 0 1 4.2 4.2a2.8000000000000003 2.8000000000000003 0 0 1 -0.7000000000000001 3.5z"/><circle cx="157" cy="240" r="1.4"/><polygon points="185.4,244.0 187.0,248.6 192.0,250.2 187.9,252.3 188.5,257.1 184.4,254.1 180.7,256.5 181.9,251.3 178.4,248.6 183.6,248.2" stroke-linejoin="round"/><circle cx="178" cy="262" r="1.4"/><polygon points="224.9,245.2 226.5,252.1 232.9,253.7 227.0,257.1 226.6,264.3 222.3,259.4 216.6,262.7 218.6,256.1 214.1,250.4 221.0,251.0" stroke-linejoin="round"/><circle cx="235" cy="263" r="1.4"/><path d="M251 264.2a3.6 3.6 0 0 1 2.4 -7.2a4.4 4.4 0 0 1 8.0 -1.6a3.6 3.6 0 0 1 4.8 4.8a3.2 3.2 0 0 1 -0.8 4.0z"/><circle cx="250" cy="268" r="1.4"/></g></pattern></defs><rect width="592" height="528" fill="url(#doodle)"/></svg>
  </div>
  <div class="a" style="left:428px;top:625px;width:592px;height:57px;background:#fff"></div>

<svg class="a" style="left:890px;top:0" width="130" height="30" viewBox="0 0 130 30"><g stroke="#9b9b9b" stroke-width="1.3" fill="none"><path d="M11 19h16"/><rect x="55.5" y="8.5" width="13" height="13" rx="2"/><path d="M101 9l12 12M113 9l-12 12"/></g></svg>
<div class="t" style="top:44.46px;font-size:16px;color:#222;font-weight:bold;letter-spacing:0.23px;left:449.00px;-webkit-text-stroke:0.25px #fff;">Кравцов Александр Игоревич</div>
<svg class="a" style="left:699px;top:43px" width="16" height="16" viewBox="0 0 24 24"><path d="M12 1.5l3.1 6.9 7.4.8-5.5 5 1.6 7.3L12 17.8l-6.6 3.7L7 14.2l-5.5-5 7.4-.8z" fill="#50a7ea" stroke="#50a7ea" stroke-width="1.2" stroke-linejoin="round"/></svg>
<div class="t" style="top:69.46px;font-size:16px;color:#2b93d6;letter-spacing:0.3px;left:449.00px;">в сети</div>
<svg class="a" style="left:826px;top:44px" width="180" height="40" viewBox="826 44 180 40"><g stroke="#9a9a9a" stroke-width="2" fill="none" stroke-linecap="round"><circle cx="844" cy="61.8" r="7.2"/><path d="M849.3 67.2l5.6 5.6"/><rect x="936" y="55.5" width="20" height="17.5" rx="3.5"/><path d="M950 55.5v17.5"/></g><path transform="translate(53.825 -442.125) scale(0.875)" d="M952.3 570.2C952.2 568 953.5 567 955 567L957.5 567C959 567 959.8 568 959.9 569.5L960 572.5C960.1 574.5 959 575.7 957.3 576.6L956.8 576.9C958.5 580.3 961.5 583.3 965 585L965.3 584.5C966.3 582.8 967.6 582 969.5 582L972.5 582.1C974 582.2 975 583 975 584.5L975 587C975 588.5 974 589.5 972 589.5C961 589.5 952.8 580 952.3 570.2Z" fill="#9a9a9a"/><circle cx="990" cy="56" r="2.3" fill="#9a9a9a"/><circle cx="990" cy="63.4" r="2.3" fill="#9a9a9a"/><circle cx="990" cy="70.9" r="2.3" fill="#9a9a9a"/></svg>
<div class="a" style="left:100px;top:41px;width:314px;height:44px;border-radius:22px;background:#f1f1f1"></div>
<div class="t" style="top:54.19px;font-size:17.5px;color:#9c9c9c;letter-spacing:0.1px;left:121.50px;">Поиск</div>
<svg class="a" style="left:330px;top:44px" width="84" height="38" viewBox="330 44 84 38"><defs><linearGradient id="sring" x1="0" y1="0" x2="0" y2="1"><stop offset="0" stop-color="#14c64a"/><stop offset="1" stop-color="#1499e6"/></linearGradient><clipPath id="sp1"><circle cx="350.3" cy="62.7" r="13.3"/></clipPath><clipPath id="sp2"><circle cx="371.9" cy="62.7" r="13.3"/></clipPath><clipPath id="sp3"><circle cx="392.5" cy="62.7" r="13.3"/></clipPath></defs><g fill="url(#sring)"><circle cx="350.3" cy="62.7" r="16.8"/><circle cx="371.9" cy="62.7" r="16.8"/><circle cx="392.5" cy="62.7" r="16.8"/></g><g fill="#fff"><circle cx="350.3" cy="62.7" r="15"/><circle cx="371.9" cy="62.7" r="15"/><circle cx="392.5" cy="62.7" r="15"/></g><g clip-path="url(#sp1)"><rect x="336" y="49" width="30" height="28" fill="#dfe9f6"/><ellipse cx="350.5" cy="63" rx="6.2" ry="8.3" fill="#c9aa98"/><path d="M344 59c0-5 3-8 6.5-8s6.5 3 6.5 8c-2-2-4-3-6.5-3s-4.5 1-6.5 3z" fill="#2a2624"/><path d="M346 67c1 3 3 4.5 4.5 4.5s3.5-1.5 4.5-4.5v2c-1 3-2.5 4-4.5 4s-3.5-1-4.5-4z" fill="#6a5048"/><path d="M340 77c2-3 6-4 10.5-4s8.5 1 10.5 4z" fill="#f2f4f8"/></g><g clip-path="url(#sp2)"><rect x="358" y="49" width="30" height="28" fill="#8c4c22"/><rect x="375" y="49" width="12" height="28" fill="#b06a34"/><ellipse cx="370" cy="60" rx="4.2" ry="5.5" fill="#d49a78"/><path d="M364 58c0-5 3-7 6-7s6 3 5 8l-2 6-3-6-3 5z" fill="#5a2a14"/><path d="M362 77c1-6 4-10 8-10s7 3 8 10z" fill="#2a1a14"/></g><g clip-path="url(#sp3)"><rect x="378" y="49" width="30" height="28" fill="#120e0b"/><path d="M388 53c2 0 4 2 4 5s-1 5-2 7l2 5-2 3-3-6 1-6z" fill="#4a3a30"/></g></svg>
<svg class="a" style="left:443px;top:639px" width="28" height="28" viewBox="0 0 28 28"><path d="M19.5 9.5l-9.3 9.3a2.6 2.6 0 0 1-3.7-3.7l9.8-9.8a4.3 4.3 0 0 1 6.1 6.1l-9.8 9.8a6 6 0 0 1-8.5-8.5l9.3-9.3" fill="none" stroke="#a3a3a3" stroke-width="2" stroke-linecap="round"/></svg>
<div class="t" style="top:644.61px;font-size:17px;color:#a3a3a3;letter-spacing:-0.2px;left:492.00px;">Сообщение...</div>
<svg class="a" style="left:918px;top:636px" width="34" height="34" viewBox="0 0 34 34"><g fill="none" stroke="#a3a3a3" stroke-width="2" stroke-linecap="round"><circle cx="17" cy="17" r="13"/><path d="M11.5 19.5c1.3 2 3.2 3 5.5 3s4.2-1 5.5-3"/></g><circle cx="12.6" cy="13.5" r="1.8" fill="#a3a3a3"/><circle cx="21.4" cy="13.5" r="1.8" fill="#a3a3a3"/></svg>
<svg class="a" style="left:976px;top:636px" width="28" height="34" viewBox="0 0 28 34"><g fill="none" stroke="#a3a3a3" stroke-width="2" stroke-linecap="round"><rect x="9" y="3" width="10" height="18" rx="5"/><path d="M4.5 15.5a9.5 9.5 0 0 0 19 0M14 25v6"/></g></svg>
<div class="a" style="left:663px;top:111px;width:121px;height:31px;border-radius:15.5px;background:#86a67a"></div>
<div class="t" style="top:119.46px;font-size:16px;color:#fff;letter-spacing:0.25px;left:523.50px;width:400px;text-align:center;-webkit-text-stroke:0.4px #fff;">17 февраля</div>
<div class="a" style="left:530px;top:151px;width:470px;height:64px;background:#effddf;border-radius:19px 19px 0px 19px;box-shadow:0 1px 0 rgba(80,130,80,.35)"></div><svg class="a" style="left:1000px;top:202px" width="9" height="14" viewBox="0 0 9 14"><path d="M0 0A15 15 0 0 0 7.5 13H0Z" fill="#effddf"/><path d="M0 13H7.5Q8 13.5 7.5 14H0Z" fill="rgba(80,130,80,.35)"/></svg>
<div class="t" style="top:165.46px;font-size:16px;color:#000;letter-spacing:0.2px;left:543.30px;">Александр, здравствуйте</div>
<div class="t" style="top:187.46px;font-size:16px;color:#000;letter-spacing:0.32px;left:543.30px;">Через 2 часа, наш разговор в силе?</div>
<div class="t" style="top:193.18px;font-size:15.5px;color:#6cc264;letter-spacing:0.55px;left:558.30px;width:400px;text-align:right;">изменено 12:56</div>
<svg class="a" style="left:968.5px;top:194px" width="22" height="12" viewBox="0 0 22 12"><path d="M1.2 6.6l3.5 3.9 9.5-9.3M9.7 9.8l.7.7 9.5-9.3" fill="none" stroke="#5dc452" stroke-width="1.7" stroke-linecap="round" stroke-linejoin="round"/></svg>
<div class="a" style="left:448px;top:224px;width:390.5px;height:42px;background:#fff;border-radius:19px 19px 19px 0px;box-shadow:0 1px 0 rgba(80,120,80,.3)"></div><svg class="a" style="left:440px;top:253px" width="9" height="14" viewBox="0 0 9 14"><path d="M8 0A15 15 0 0 1 .5 13H8Z" fill="#fff"/><path d="M8 13H.5Q0 13.5 .5 14H8Z" fill="rgba(80,120,80,.3)"/></svg>
<div class="t" style="top:239.46px;font-size:16px;color:#000;letter-spacing:0.2px;left:462.00px;">Да, конечно. Сколько он будет длится ?)</div>
<div class="t" style="top:244.88px;font-size:15.5px;color:#a0acb6;letter-spacing:0.2px;left:426.40px;width:400px;text-align:right;">14:12</div>
<div class="a" style="left:697.5px;top:275px;width:302.5px;height:63px;background:#effddf;border-radius:19px 19px 0px 19px;box-shadow:0 1px 0 rgba(80,130,80,.35)"></div><svg class="a" style="left:1000px;top:325px" width="9" height="14" viewBox="0 0 9 14"><path d="M0 0A15 15 0 0 0 7.5 13H0Z" fill="#effddf"/><path d="M0 13H7.5Q8 13.5 7.5 14H0Z" fill="rgba(80,130,80,.35)"/></svg>
<div class="t" style="top:289.46px;font-size:16px;color:#000;letter-spacing:0.42px;left:711.40px;">В зависимости от Ваших вопросов.</div>
<div class="t" style="top:311.26px;font-size:16px;color:#000;letter-spacing:0.5px;left:711.40px;">Примерно 10-15 минут.</div>
<div class="t" style="top:316.38px;font-size:15.5px;color:#6cc264;letter-spacing:0.2px;left:558.30px;width:400px;text-align:right;">14:13</div>
<svg class="a" style="left:968.5px;top:317px" width="22" height="12" viewBox="0 0 22 12"><path d="M1.2 6.6l3.5 3.9 9.5-9.3M9.7 9.8l.7.7 9.5-9.3" fill="none" stroke="#5dc452" stroke-width="1.7" stroke-linecap="round" stroke-linejoin="round"/></svg>
<div class="a" style="left:448px;top:347.5px;width:148.29999999999995px;height:42.5px;background:#fff;border-radius:19px 19px 19px 0px;box-shadow:0 1px 0 rgba(80,120,80,.3)"></div><svg class="a" style="left:440px;top:377px" width="9" height="14" viewBox="0 0 9 14"><path d="M8 0A15 15 0 0 1 .5 13H8Z" fill="#fff"/><path d="M8 13H.5Q0 13.5 .5 14H8Z" fill="rgba(80,120,80,.3)"/></svg>
<div class="t" style="top:362.46px;font-size:16px;color:#000;letter-spacing:0.2px;left:462.00px;">Хорошо.</div>
<div class="t" style="top:367.88px;font-size:15.5px;color:#a0acb6;letter-spacing:0.2px;left:184.00px;width:400px;text-align:right;">14:13</div>
<div class="a" style="left:498px;top:399px;width:502px;height:142px;background:#effddf;border-radius:19px 19px 7px 19px;box-shadow:0 1px 0 rgba(80,130,80,.35)"></div>
<div class="a" style="left:513.1px;top:408.7px;width:54.8px;height:54.8px;border-radius:50%;background:#62bd69"></div>
<svg class="a" style="left:526px;top:422px" width="28" height="28" viewBox="526 422 28 28"><path d="M532.8 424.7H543.6L551 432.1V443.2A4 4 0 0 1 547 447.2H532.8A4 4 0 0 1 528.8 443.2V428.7A4 4 0 0 1 532.8 424.7Z" fill="#effddf"/><path d="M540.2 428.2L547.9 435.8H541.4A1.2 1.2 0 0 1 540.2 434.6Z" fill="#62bd69"/></svg>
<div class="a" style="left:513.1px;top:475.7px;width:54.8px;height:54.8px;border-radius:50%;background:#62bd69"></div>
<svg class="a" style="left:526px;top:489px" width="28" height="28" viewBox="526 422 28 28"><path d="M532.8 424.7H543.6L551 432.1V443.2A4 4 0 0 1 547 447.2H532.8A4 4 0 0 1 528.8 443.2V428.7A4 4 0 0 1 532.8 424.7Z" fill="#effddf"/><path d="M540.2 428.2L547.9 435.8H541.4A1.2 1.2 0 0 1 540.2 434.6Z" fill="#62bd69"/></svg>
<div class="t" style="top:418.46px;font-size:16px;color:#000;font-weight:bold;-webkit-text-stroke:0.3px #effddf;letter-spacing:-0.06px;left:582.00px;">Декларация_за_промян ... ражданството_1 (3).docx</div>
<div class="t" style="top:445.48px;font-size:15.5px;color:#76c272;letter-spacing:0.1px;left:582.00px;">67.3 KB</div>
<div class="t" style="top:485.46px;font-size:16px;color:#000;font-weight:bold;-webkit-text-stroke:0.3px #effddf;left:582.00px;">ДревоНЮ.xlsx</div>
<div class="t" style="top:512.48px;font-size:15.5px;color:#76c272;letter-spacing:0.1px;left:582.00px;">21.6 KB</div>
<div class="t" style="top:518.88px;font-size:15.5px;color:#6cc264;letter-spacing:0.2px;left:558.30px;width:400px;text-align:right;">15:07</div>
<svg class="a" style="left:968.5px;top:520px" width="22" height="12" viewBox="0 0 22 12"><path d="M1.2 6.6l3.5 3.9 9.5-9.3M9.7 9.8l.7.7 9.5-9.3" fill="none" stroke="#5dc452" stroke-width="1.7" stroke-linecap="round" stroke-linejoin="round"/></svg>
<div class="a" style="left:700.5px;top:543px;width:299.5px;height:70px;background:#effddf;border-radius:19px 7px 0px 19px;box-shadow:0 1px 0 rgba(80,130,80,.35)"></div><svg class="a" style="left:1000px;top:600px" width="9" height="14" viewBox="0 0 9 14"><path d="M0 0A15 15 0 0 0 7.5 13H0Z" fill="#effddf"/><path d="M0 13H7.5Q8 13.5 7.5 14H0Z" fill="rgba(80,130,80,.35)"/></svg>
<div class="t" style="top:558.86px;font-size:16px;color:#000;font-weight:bold;-webkit-text-stroke:0.3px #effddf;letter-spacing:0.35px;left:720.50px;">Исходящий звонок</div>
<svg class="a" style="left:720px;top:581px" width="18" height="18" viewBox="0 0 18 18"><path d="M3 15L15 3M6.5 3H15V11.5" fill="none" stroke="#4db54c" stroke-width="2.3" stroke-linecap="round" stroke-linejoin="round"/></svg>
<div class="t" style="top:583.46px;font-size:16px;color:#6cc264;letter-spacing:0.1px;left:746.00px;">15:21, 20 мин. 0 сек.</div>
<svg class="a" style="left:950px;top:565px" width="28" height="28" viewBox="950 565 28 28"><path d="M952.3 570.2C952.2 568 953.5 567 955 567L957.5 567C959 567 959.8 568 959.9 569.5L960 572.5C960.1 574.5 959 575.7 957.3 576.6L956.8 576.9C958.5 580.3 961.5 583.3 965 585L965.3 584.5C966.3 582.8 967.6 582 969.5 582L972.5 582.1C974 582.2 975 583 975 584.5L975 587C975 588.5 974 589.5 972 589.5C961 589.5 952.8 580 952.3 570.2Z" fill="#5fbf63"/></svg>
</div>
</body></html>
